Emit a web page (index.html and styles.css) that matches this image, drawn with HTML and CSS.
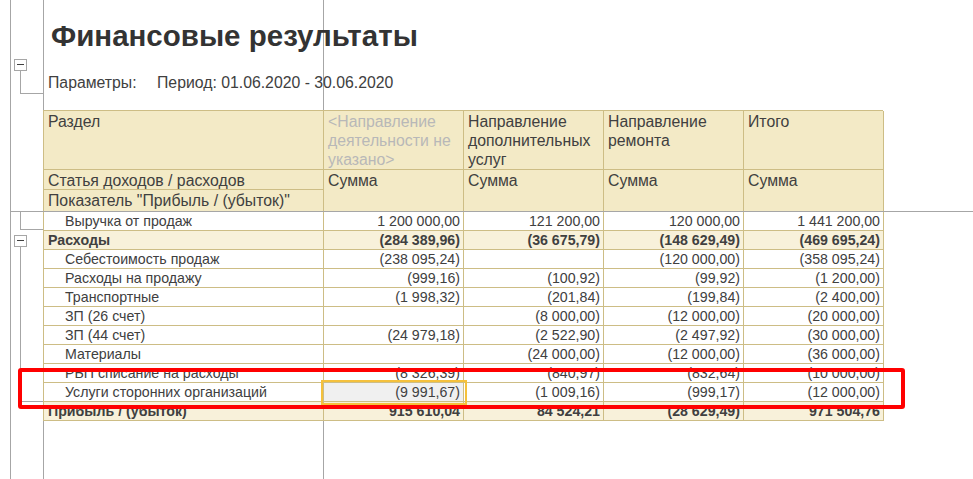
FILE: index.html
```html
<!DOCTYPE html>
<html lang="ru">
<head>
<meta charset="utf-8">
<title>Финансовые результаты</title>
<link rel="stylesheet" href="styles.css">
</head>
<body>
<div class="sheet">
  <div class="guide guide-v g10"></div>
  <div class="guide guide-v g43"></div>
  <div class="guide guide-v g323"></div>
  <div class="guide guide-h g211"></div>

  <div class="tree">
    <div class="tbox tbox1"></div>
    <div class="tline tl1v"></div>
    <div class="tline tl1h"></div>
    <div class="tline tl2v"></div>
    <div class="tline tl2h"></div>
    <div class="tbox tbox2"></div>
    <div class="tline tl3v"></div>
    <div class="tline tl3h"></div>
  </div>

  <h1 class="title">Финансовые результаты</h1>
  <div class="params"><span class="plabel">Параметры:</span><span>Период: 01.06.2020 - 30.06.2020</span></div>

  <div class="grid">
    <div class="c h h1">Раздел</div>
    <div class="c h h1 muted">&lt;Направление деятельности не указано&gt;</div>
    <div class="c h h1">Направление дополнительных услуг</div>
    <div class="c h h1">Направление ремонта</div>
    <div class="c h h1">Итого</div>

    <div class="c h h2">Статья доходов / расходов</div>
    <div class="c h hs">Сумма</div>
    <div class="c h hs">Сумма</div>
    <div class="c h hs">Сумма</div>
    <div class="c h hs">Сумма</div>
    <div class="c h h3">Показатель "Прибыль / (убыток)"</div>

    <div class="c name">Выручка от продаж</div>
    <div class="c num">1 200 000,00</div>
    <div class="c num">121 200,00</div>
    <div class="c num">120 000,00</div>
    <div class="c num">1 441 200,00</div>

    <div class="c name group">Расходы</div>
    <div class="c num group">(284 389,96)</div>
    <div class="c num group">(36 675,79)</div>
    <div class="c num group">(148 629,49)</div>
    <div class="c num group">(469 695,24)</div>

    <div class="c name">Себестоимость продаж</div>
    <div class="c num">(238 095,24)</div>
    <div class="c num"></div>
    <div class="c num">(120 000,00)</div>
    <div class="c num">(358 095,24)</div>

    <div class="c name">Расходы на продажу</div>
    <div class="c num">(999,16)</div>
    <div class="c num">(100,92)</div>
    <div class="c num">(99,92)</div>
    <div class="c num">(1 200,00)</div>

    <div class="c name">Транспортные</div>
    <div class="c num">(1 998,32)</div>
    <div class="c num">(201,84)</div>
    <div class="c num">(199,84)</div>
    <div class="c num">(2 400,00)</div>

    <div class="c name">ЗП (26 счет)</div>
    <div class="c num"></div>
    <div class="c num">(8 000,00)</div>
    <div class="c num">(12 000,00)</div>
    <div class="c num">(20 000,00)</div>

    <div class="c name">ЗП (44 счет)</div>
    <div class="c num">(24 979,18)</div>
    <div class="c num">(2 522,90)</div>
    <div class="c num">(2 497,92)</div>
    <div class="c num">(30 000,00)</div>

    <div class="c name">Материалы</div>
    <div class="c num"></div>
    <div class="c num">(24 000,00)</div>
    <div class="c num">(12 000,00)</div>
    <div class="c num">(36 000,00)</div>

    <div class="c name">РБП списание на расходы</div>
    <div class="c num">(8 326,39)</div>
    <div class="c num">(840,97)</div>
    <div class="c num">(832,64)</div>
    <div class="c num">(10 000,00)</div>

    <div class="c name">Услуги сторонних организаций</div>
    <div class="c num selected">(9 991,67)</div>
    <div class="c num">(1 009,16)</div>
    <div class="c num">(999,17)</div>
    <div class="c num">(12 000,00)</div>

    <div class="c name group">Прибыль / (убыток)</div>
    <div class="c num group">915 610,04</div>
    <div class="c num group">84 524,21</div>
    <div class="c num group">(28 629,49)</div>
    <div class="c num group">971 504,76</div>
  </div>

  <div class="highlight"></div>
</div>
</body>
</html>
```

FILE: styles.css
```css
* { box-sizing: border-box; }

html, body {
  margin: 0;
  padding: 0;
  background: #ffffff;
}

body {
  font-family: "Liberation Sans", Arial, sans-serif;
  color: #404040;
}

.sheet {
  position: relative;
  width: 973px;
  height: 479px;
  overflow: hidden;
  padding-left: 43px;
}

.guide {
  position: absolute;
  background: #a6a6a6;
  z-index: 0;
}
.guide-v { top: 0; bottom: 0; width: 1px; }
.g10 { left: 10px; }
.g43 { left: 43px; }
.g323 { left: 323px; }
.guide-h { height: 1px; left: 10px; right: 0; }
.g211 { top: 211px; z-index: 3; }

.tree { position: absolute; inset: 0; z-index: 2; pointer-events: none; }
.tbox {
  position: absolute;
  width: 13px;
  height: 12px;
  border: 1px solid #a6a6a6;
  background: #fff;
}
.tbox::after {
  content: "";
  position: absolute;
  left: 2px;
  right: 2px;
  top: 4px;
  height: 1px;
  background: #404040;
}
.tbox1 { left: 14px; top: 59px; }
.tbox2 { left: 14px; top: 235px; }
.tline { position: absolute; background: #a6a6a6; }
.tl1v { left: 20px; top: 71px; width: 1px; height: 22px; }
.tl1h { left: 20px; top: 93px; width: 23px; height: 1px; }
.tl2v { left: 20px; top: 211px; width: 1px; height: 18px; }
.tl2h { left: 20px; top: 229px; width: 23px; height: 1px; }
.tl3v { left: 20px; top: 247px; width: 1px; height: 154px; }
.tl3h { left: 20px; top: 401px; width: 23px; height: 1px; }

.title {
  position: relative;
  z-index: 1;
  margin: 19px 0 0 0;
  padding-left: 8px;
  font-size: 29.5px;
  line-height: 33px;
  font-weight: bold;
  color: #333333;
}

.params {
  position: relative;
  z-index: 1;
  margin-top: 21px;
  padding-left: 5px;
  font-size: 15.8px;
  line-height: 19px;
  color: #404040;
  display: flex;
}
.plabel { width: 109px; }

.grid {
  position: relative;
  z-index: 1;
  margin-top: 18px;
  display: grid;
  grid-template-columns: 280px 140px 140px 140px 140px;
  grid-template-rows: 59px 20px 22px repeat(11, 19px);
  width: 840px;
  border-top: 1px solid #cdbd85;
  border-left: 1px solid #cdbd85;
  font-size: 14.2px;
}

.c {
  border-right: 1px solid #cdbd85;
  border-bottom: 1px solid #cdbd85;
  line-height: 18px;
  white-space: nowrap;
  background: #ffffff;
}

.h {
  background: #f3eac6;
  padding: 1px 4px 0 4px;
  white-space: normal;
  line-height: 19px;
  font-size: 15.8px;
  color: #404040;
}
.h1 { grid-row: 1; }
.h2 { grid-column: 1; grid-row: 2; }
.h3 { grid-column: 1; grid-row: 3; }
.hs { grid-row: 2 / span 2; }
.muted { color: #b8b8b8; }

.name { padding-left: 21px; }
.num {
  text-align: right;
  padding-right: 3px;
}

.group {
  background: #f8f1da;
  font-weight: bold;
}
.name.group { padding-left: 4px; }

.selected {
  background: #f0f0f0;
  outline: 2px solid #f5c13c;
  outline-offset: 1px;
  position: relative;
  z-index: 2;
}

.highlight {
  position: absolute;
  left: 18px;
  top: 368px;
  width: 887px;
  height: 41px;
  border: 4px solid #ff0000;
  border-radius: 3px;
  z-index: 5;
}
```
